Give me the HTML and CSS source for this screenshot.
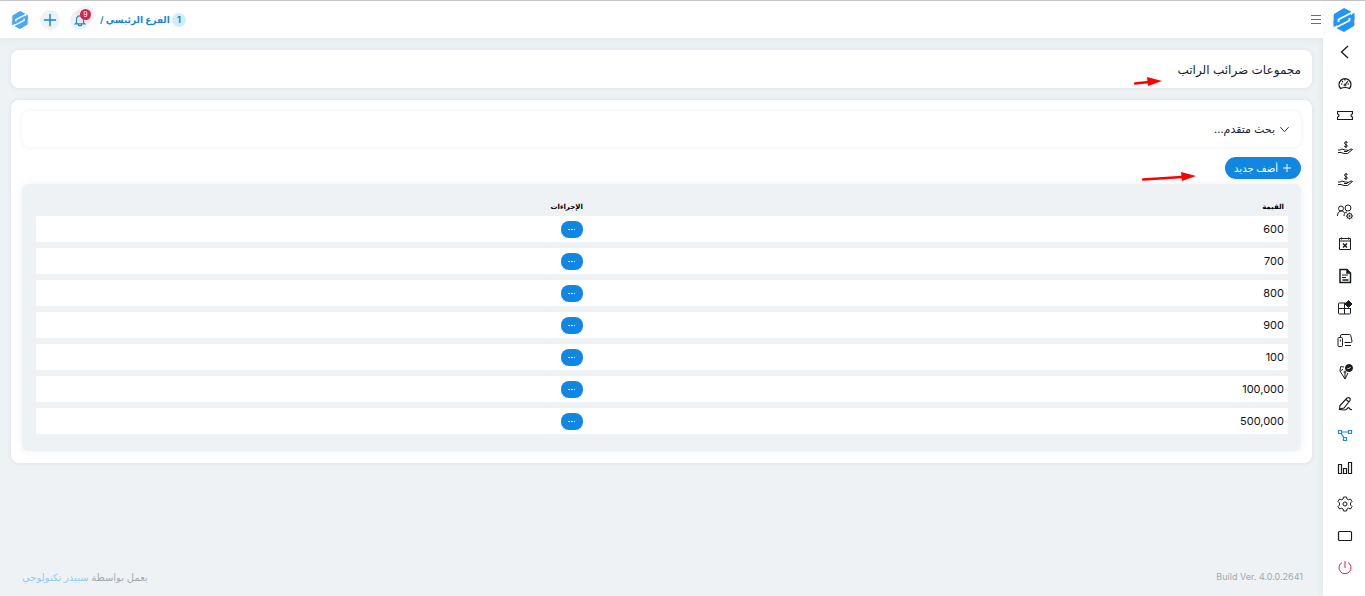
FILE: index.html
```html
<!DOCTYPE html>
<html lang="ar" dir="rtl">
<head>
<meta charset="utf-8">
<meta name="viewport" content="width=device-width, initial-scale=1">
<title>مجموعات ضرائب الراتب</title>
<link rel="stylesheet" href="styles.css">
</head>
<body>
<svg class="defs" aria-hidden="true">
  <symbol id="logo" viewBox="0 0 24 26">
    <path d="M1.500 8v11M22.500 8v11" stroke="#f8c9a4" stroke-width="1.500"/>
    <path d="M12 1 22 6v13l-10 6-10-5V7z" fill="currentColor"/>
    <path d="M20 5.500 6.500 12.500v2.500M4 20.500l13.500-7V11" stroke="#fff" stroke-width="1.800" fill="none"/>
    <path d="m19 4.500 4 2v4l-4-3zM1 16l4 3v3l-4-2z" fill="#fff" stroke="none"/>
    <path d="m20 7 2.500-1v7L20 11zM1.500 14 4 15v4l-2.500 1z" fill="currentColor"/>
  </symbol>
  <symbol id="hand" viewBox="0 0 16 16">
    <path d="M1 10h2l2-1 3 1h2c1 0 1 1 0 1.500H7M10 11l4-2 1.500.5-5 4H7l-3-1H1" />
    <path d="M10.500 2.500C9.500 1.500 7 2 7.500 3.500S10.500 4.500 10.300 6 8 7 7 6M9 1v7"/>
  </symbol>
</svg>
<div class="app">
  <aside class="sidebar">
    <a class="brand" href="#" aria-label="الشعار"><svg><use href="#logo"/></svg></a>
    <nav class="menu" aria-label="القائمة">
      <a href="#" aria-label="رجوع"><svg viewBox="0 0 16 16"><path d="M11 2 4.500 8l6.500 6" stroke-width="1.300"/></svg></a>
      <a href="#" aria-label="لوحة التحكم"><svg viewBox="0 0 16 16"><path d="M3.500 12.500a6 6 0 1 1 9 0q-4.500-2-9 0zM8 9l3-4M8 3v1.500M4 8h1.500M10.500 8H12M5 5l1 1" stroke-width="1.200"/><circle cx="8" cy="9" r="1"/></svg></a>
      <a href="#" aria-label="التذاكر"><svg viewBox="0 0 16 16"><path d="M.5 3.500h15V6a1.500 1.500 0 0 0 0 3v2.500H.5V9a1.500 1.500 0 0 0 0-3z" stroke-width="1.200"/></svg></a>
      <a href="#" aria-label="السلف"><svg><use href="#hand"/></svg></a>
      <a href="#" aria-label="الرواتب"><svg><use href="#hand"/></svg></a>
      <a href="#" aria-label="الموظفون"><svg viewBox="0 0 16 16"><circle cx="4" cy="4.500" r="2.500"/><circle cx="11" cy="4" r="3"/><path d="M.5 12c0-6 6-6 7-3M7 12c0-2 1-4 3-4"/><circle cx="12.500" cy="12" r="2.500"/><circle cx="12.500" cy="12" r=".7"/><path d="M12.500 8.500v1M12.500 14.500v1M9 12h1M15 12h1M10 9.500l.8.800M15 9.500l-.8.800M10 14.500l.8-.8M15 14.500l-.8-.8"/></svg></a>
      <a href="#" aria-label="الإجازات"><svg viewBox="0 0 16 16"><path d="M2.500 2.500h11v11h-11zM2.500 5h11M4.500 1.500v2M11.500 1.500v2"/><path d="m6 7.500 4 4m0-4-4 4" stroke-width="1.500"/></svg></a>
      <a href="#" aria-label="المستندات"><svg viewBox="0 0 16 16"><path d="M3 1.500h7l3.500 3.500v9.500H3zM10 1.500V5h3.500M5.500 12h6" stroke-width="1.500"/><path d="M5 7h6M5 9.500h4"/></svg></a>
      <a href="#" aria-label="التطبيقات"><svg viewBox="0 0 16 16"><path d="M8.500 3h-6q-1 0-1 1v9q0 1 1 1h10q1 0 1-1V8M1.500 8.500h12M7.500 3v11"/><path d="m11.500.500 3.500 3.500-3.500 3.500L8 4z" fill="currentColor"/></svg></a>
      <a href="#" aria-label="الأجهزة"><svg viewBox="0 0 16 16"><path d="M3.500 5V4q0-1.500 1.500-1.500h7.500q1 0 1.200 1L15 9q.2 1.500-1.500 1.500H7.500M8 13.500h6"/><rect x="1" y="5.500" width="4.500" height="9" rx="1"/><path d="M3.300 7.500v2"/></svg></a>
      <a href="#" aria-label="الموافقات"><svg viewBox="0 0 16 16"><path d="M3.500 2.500 7 3M3.500 3 3 7l5 8 3-6M8 15V9M6 5l-2.500 2"/><circle cx="8" cy="8" r="1"/><circle cx="12" cy="4" r="3.500" fill="currentColor"/><path d="m10.500 4 1 1 2-2" stroke="#fff"/></svg></a>
      <a href="#" aria-label="التوقيع"><svg viewBox="0 0 16 16"><path d="M2.500 13 3 9.500l7-7.500c2-1 4 0 3 2.500L7 12zM9 3.500 12 6M2 13.500l6 .5c2 0 2.500-2.500 3.500-2.500S12 14 15 13.500" stroke-width="1.200"/></svg></a>
      <a class="active" href="#" aria-label="الهيكل"><svg viewBox="0 0 16 16"><path d="M1.500 2.500h3v3h-3zM11.500 2.500h3v3h-3zM6.500 9.500h3v3h-3zM4.500 4h7M4 5.500l3 4" stroke-width="1.200"/></svg></a>
      <a href="#" aria-label="التقارير"><svg viewBox="0 0 16 16"><path d="M1.500 4.500h3v9h-3zM6.500 8.500h3v5h-3zM11.500 2.500h3v11h-3z" stroke-width="1.200"/></svg></a>
    </nav>
    <nav class="menu tools" aria-label="الحساب">
      <a href="#" aria-label="الإعدادات"><svg viewBox="0 0 16 16"><circle cx="8" cy="8" r="2"/><path d="m6.500 1-.5 2-1.500.8-2-.8L1 5.500 2.500 7v2L1 10.500 2.500 13l2-.8L6 13l.5 2h3l.5-2 1.500-.8 2 .8 1.500-2.500L13.500 9V7L15 5.500 13.500 3l-2 .8L10 3l-.5-2z"/></svg></a>
      <a href="#" aria-label="ملء الشاشة"><svg viewBox="0 0 16 16"><rect x="1.500" y="3.500" width="13" height="9" rx="1" stroke-width="1.200"/></svg></a>
      <a class="power" href="#" aria-label="خروج"><svg viewBox="0 0 16 16"><path d="M5 2.500a6 6 0 1 0 6 0M8 1v7"/></svg></a>
    </nav>
  </aside>
  <div class="page">
    <header class="topbar">
      <button class="toggle" type="button" aria-label="القائمة الجانبية"><svg viewBox="0 0 12 11"><path d="M1 1.500h10M1 5.500h10M1 9.500h10"/></svg></button>
      <div class="actions">
        <a class="branch" href="#"><span class="count">1</span><span>الفرع الرئيسي /</span></a>
        <button class="round bell" type="button" aria-label="الإشعارات"><svg viewBox="0 0 16 16"><path d="M2.500 12.500h11L12 11V7c0-5-8-5-8 0v4zM6 12.500c0 3 4 3 4 0" stroke-width="1.300"/></svg><span class="badge">9</span></button>
        <button class="round" type="button" aria-label="إضافة"><svg viewBox="0 0 16 16"><path d="M8 1v14M1 8h14" stroke-width="1.700"/></svg></button>
        <a class="round user" href="#" aria-label="المستخدم"><svg><use href="#logo"/></svg></a>
      </div>
    </header>
    <main class="content">
      <section class="card heading">
        <h1>مجموعات ضرائب الراتب</h1>
        <svg class="arrow arrow-title" viewBox="0 0 28 10" aria-hidden="true"><path d="M1 6.500 15 5" stroke="red" stroke-width="2.500" stroke-linecap="round"/><path d="m13 0 15 4-14 5z" fill="red"/></svg>
      </section>
      <section class="card panel">
        <button class="search" type="button"><svg viewBox="0 0 12 12"><path d="m1.500 4 4.500 5 4.500-5"/></svg><span>بحث متقدم...</span></button>
        <div class="toolbar">
          <button class="add" type="button"><svg viewBox="0 0 10 10"><path d="M5 1v8M1 5h8"/></svg><span>أضف جديد</span></button>
          <svg class="arrow arrow-add" viewBox="0 0 54 10" aria-hidden="true"><path d="M1 7.500 40 5" stroke="red" stroke-width="2.500" stroke-linecap="round"/><path d="m39 0 15 4-14 5z" fill="red"/></svg>
        </div>
        <div class="table-box">
          <table>
            <thead><tr><th class="value" scope="col">القيمة</th><th scope="col">الإجراءات</th></tr></thead>
            <tbody>
              <tr><td>600</td><td><button class="more" type="button" aria-label="إجراءات"><i></i></button></td></tr>
              <tr><td>700</td><td><button class="more" type="button" aria-label="إجراءات"><i></i></button></td></tr>
              <tr><td>800</td><td><button class="more" type="button" aria-label="إجراءات"><i></i></button></td></tr>
              <tr><td>900</td><td><button class="more" type="button" aria-label="إجراءات"><i></i></button></td></tr>
              <tr><td>100</td><td><button class="more" type="button" aria-label="إجراءات"><i></i></button></td></tr>
              <tr><td>100,000</td><td><button class="more" type="button" aria-label="إجراءات"><i></i></button></td></tr>
              <tr><td>500,000</td><td><button class="more" type="button" aria-label="إجراءات"><i></i></button></td></tr>
            </tbody>
          </table>
        </div>
      </section>
    </main>
    <footer class="footer">
      <span class="build" dir="ltr">Build Ver. 4.0.0.2641</span>
      <span>يعمل بواسطة <a href="#">سبيدر تكنولوجي</a></span>
    </footer>
  </div>
</div>
</body>
</html>
```

FILE: styles.css
```css
* { box-sizing: border-box; }
body {
  margin: 0;
  background: #eef2f5;
  color: #181c32;
  font-family: Inter, "DejaVu Sans", sans-serif;
  font-size: 11px;
}
button { border: 0; padding: 0; background: none; font: inherit; color: inherit; cursor: pointer; }
a { color: inherit; text-decoration: none; }
svg { display: block; fill: none; stroke: currentColor; stroke-width: 1; }
.defs { position: absolute; width: 0; height: 0; }
#logo path[fill="currentColor"] { stroke: none; }
#hand path { fill: none; stroke: currentColor; }

.app { display: flex; min-height: 100vh; border-top: 1px solid #c8c8c8; }
.sidebar { flex: none; width: 42px; background: #fff; display: flex; flex-direction: column; align-items: center; box-shadow: 0 0 8px rgba(40, 60, 80, .08); }
.brand { padding-top: 6px; height: 35px; color: #2196f3; }
.brand svg { width: 24px; height: 26px; stroke: none; }
.menu { display: flex; flex-direction: column; color: #181c20; padding-left: 2px; }
.menu a { height: 32px; display: flex; align-items: center; justify-content: center; }
.menu svg { width: 16px; height: 16px; }
.tools { margin-top: 4px; }
.menu .active { color: #1e88e5; }
.menu .power { color: #d9214e; }

.page { flex: 1; min-width: 0; display: flex; flex-direction: column; }
.topbar { height: 37px; padding: 0 1px 0 10px; background: #fff; display: flex; align-items: center; justify-content: space-between; box-shadow: 0 2px 8px rgba(40, 60, 80, .05); }
.toggle { color: #1287e2; }
.toggle svg { width: 12px; height: 11px; }
.actions { display: flex; align-items: center; gap: 10px; color: #1287e2; }
.branch { display: flex; align-items: center; gap: 2px; font-size: 9px; font-weight: 700; }
.count { width: 14px; height: 14px; border-radius: 50%; background: #d5eafc; line-height: 14px; text-align: center; }
.round { position: relative; width: 20px; height: 20px; border-radius: 50%; background: #eef2f5; display: flex; align-items: center; justify-content: center; }
.round svg { width: 14px; height: 14px; }
.badge { position: absolute; top: -1px; right: -1px; width: 11px; height: 11px; border-radius: 50%; background: #d2254e; color: #fff; font-size: 7px; line-height: 11px; box-shadow: 0 0 0 4px rgba(217, 33, 78, .06); }
.user { color: #48a8f5; background: none; }
.user svg { width: 18px; height: 20px; stroke: none; }

.content { padding: 12px 11px; display: flex; flex-direction: column; gap: 12px; }
.card { position: relative; background: #fff; border-radius: 8px; box-shadow: 0 0 4px rgba(60, 70, 80, .1); }
.heading { height: 38px; padding: 0 11px; display: flex; align-items: center; }
h1 { margin: 0; font-size: 12px; font-weight: 400; }
.panel { padding: 11px 11px 12px; }
.search { width: 100%; height: 36px; padding: 0 11px; display: flex; align-items: center; gap: 4px; border-radius: 8px; box-shadow: 0 0 5px rgba(60, 70, 80, .09); font-size: 11px; }
.search svg { width: 11px; height: 12px; }
.toolbar { position: relative; padding: 10px 0 5px; display: flex; }
.add { height: 22px; padding: 0 9px; border-radius: 11px; background: #1287e2; color: #fff; display: flex; align-items: center; gap: 4px; font-size: 10px; }
.add svg { width: 10px; height: 10px; }
.arrow { position: absolute; height: 10px; stroke: none; }
.arrow-title { width: 28px; right: 150px; top: 27px; }
.arrow-add { width: 54px; right: 105px; top: 25px; }
.table-box { padding: 12px 13px 17px 14px; background: #eef2f5; border-radius: 6px; box-shadow: 0 0 8px rgba(60, 70, 80, .07); }
table { width: 100%; border-collapse: separate; border-spacing: 0 6px; margin: -6px 0; table-layout: fixed; }
th { height: 14px; padding: 4px 4px 0; text-align: right; vertical-align: bottom; font-size: 7px; line-height: 6px; color: #000; }
.value { width: 56%; }
td { height: 26px; padding: 0 4px; background: #fff; color: #111; line-height: 18px; }
.more { width: 22px; height: 17px; border-radius: 8px; background: #1287e2; display: flex; align-items: center; justify-content: center; }
.more i { width: 7px; height: 1px; background: repeating-linear-gradient(90deg, #fff 0 2px, transparent 2px 3px); }

.footer { margin-top: auto; padding: 0 20px 12px 22px; display: flex; justify-content: space-between; font-size: 10px; line-height: 14px; color: #a4a9ad; }
.build { font-size: 9px; }
.footer a { color: #93c8f1; }
```
